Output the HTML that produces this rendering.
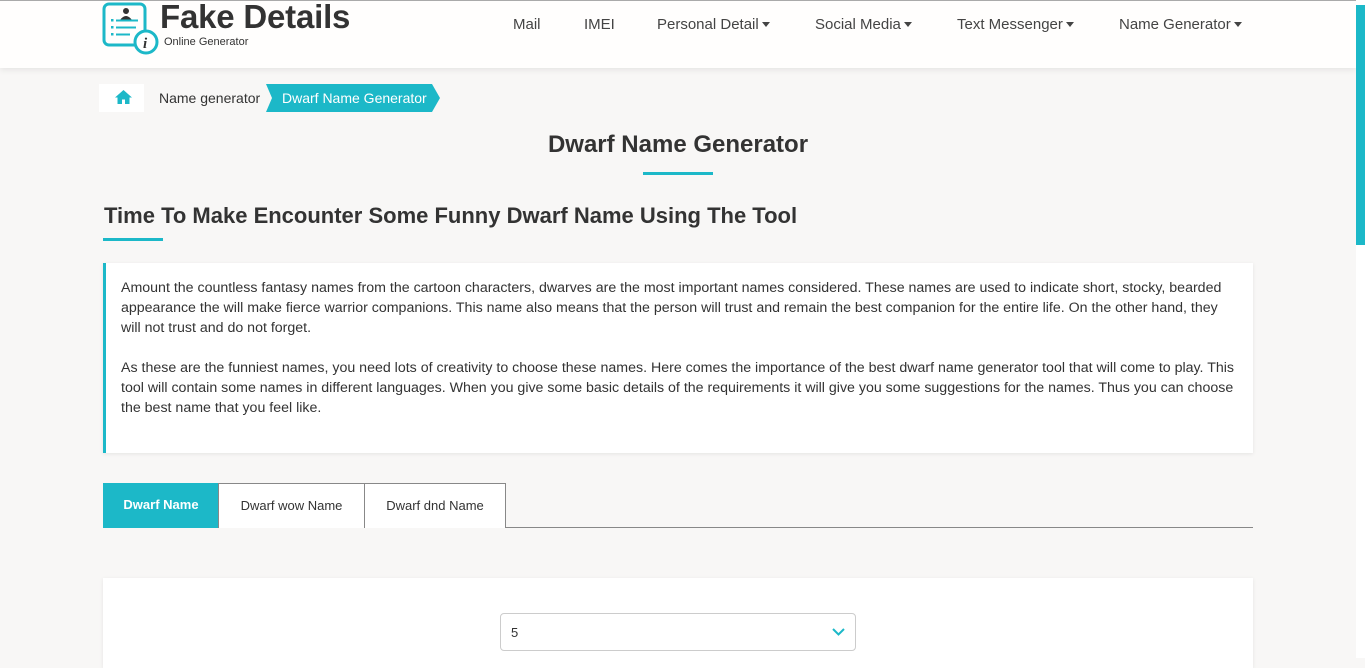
<!DOCTYPE html>
<html><head><style>
*{box-sizing:border-box;margin:0;padding:0}
body{width:1365px;height:658px;overflow:hidden;background:#f8f7f6;font-family:"Liberation Sans",sans-serif;color:#333;position:relative}
.hdr{position:absolute;left:0;top:0;width:1356px;height:68px;background:#fffefd;border-top:1px solid #aaa;box-shadow:0 2px 6px rgba(0,0,0,.08)}
.sb{position:absolute;left:1356px;top:0;width:9px;height:658px;background:#fff}
.sb i{position:absolute;left:0;top:5px;width:9px;height:240px;background:#1cb8c8}
.nav{position:absolute;top:15px;font-size:15px;color:#444}
.car{display:inline-block;border-left:4px solid transparent;border-right:4px solid transparent;border-top:5px solid #444;vertical-align:2px;margin-left:3px}
.t{position:absolute}
</style></head><body>
<div class="hdr">
<svg class="t" style="left:102px;top:1px" width="60" height="54" viewBox="0 0 60 54">
<rect x="2" y="2" width="41" height="41" rx="5" fill="none" stroke="#1cb8c8" stroke-width="3"/>
<circle cx="24" cy="9" r="3" fill="#333"/><path d="M18 18q6-8 12 0z" fill="#333"/>
<rect x="9" y="17" width="2.5" height="2.5" fill="#1cb8c8"/><rect x="14" y="17.5" width="22" height="2" fill="#1cb8c8"/>
<rect x="9" y="24" width="2.5" height="2.5" fill="#1cb8c8"/><rect x="14" y="24.5" width="20" height="2" fill="#1cb8c8"/>
<rect x="9" y="31" width="2.5" height="2.5" fill="#1cb8c8"/><rect x="14" y="31.5" width="14" height="2" fill="#1cb8c8"/>
<circle cx="44" cy="40" r="11" fill="#fff" stroke="#1cb8c8" stroke-width="3"/>
<text x="41" y="46" font-family="Liberation Serif" font-style="italic" font-weight="bold" font-size="15" fill="#333">i</text>
</svg>
<div class="t" style="left:160px;top:-3px;font-size:33px;font-weight:bold;color:#333;letter-spacing:-.2px">Fake Details</div>
<div class="t" style="left:164px;top:35px;font-size:11px;color:#333">Online Generator</div>
<div class="nav" style="left:513px">Mail</div>
<div class="nav" style="left:584px">IMEI</div>
<div class="nav" style="left:657px">Personal Detail<span class="car"></span></div>
<div class="nav" style="left:815px">Social Media<span class="car"></span></div>
<div class="nav" style="left:957px">Text Messenger<span class="car"></span></div>
<div class="nav" style="left:1119px">Name Generator<span class="car"></span></div>
</div>
<div class="sb"><i></i></div>
<div class="t" style="left:99px;top:84px;width:45px;height:28px;background:#fff"></div>
<svg class="t" style="left:114px;top:89px" width="19" height="16" viewBox="0 0 19 16"><path d="M9.5 1L1 8.5h2.5V15h4.5v-4.5h3V15h4.5V8.5H18z" fill="#1cb8c8"/></svg>
<div class="t" style="left:159px;top:90px;font-size:14px;color:#333">Name generator</div>
<svg class="t" style="left:266px;top:84px" width="175" height="28"><polygon points="0,0 166,0 174,14 166,28 0,28 6,14" fill="#1cb8c8"/></svg>
<div class="t" style="left:282px;top:90px;font-size:14px;color:#fff">Dwarf Name Generator</div>
<div class="t" style="left:0;width:1356px;top:131px;text-align:center;font-size:24px;font-weight:bold;color:#333">Dwarf Name Generator</div>
<div class="t" style="left:643px;top:172px;width:70px;height:3px;background:#1cb8c8"></div>
<div class="t" style="left:104px;top:203px;font-size:22px;font-weight:bold;color:#333">Time To Make Encounter Some Funny Dwarf Name Using The Tool</div>
<div class="t" style="left:103px;top:238px;width:60px;height:3px;background:#1cb8c8"></div>
<div class="t" style="left:103px;top:263px;width:1150px;height:190px;background:#fff;border-left:3px solid #1cb8c8;box-shadow:0 1px 4px rgba(0,0,0,.08);padding:15px 15px;font-size:14.2px;line-height:20px;color:#333">
<p>Amount the countless fantasy names from the cartoon characters, dwarves are the most important names considered. These names are used to indicate short, stocky, bearded appearance the will make fierce warrior companions. This name also means that the person will trust and remain the best companion for the entire life. On the other hand, they will not trust and do not forget.</p>
<p style="margin-top:20px">As these are the funniest names, you need lots of creativity to choose these names. Here comes the importance of the best dwarf name generator tool that will come to play. This tool will contain some names in different languages. When you give some basic details of the requirements it will give you some suggestions for the names. Thus you can choose the best name that you feel like.</p>
</div>
<div class="t" style="left:103px;top:527px;width:1150px;height:1px;background:#888"></div>
<div class="t" style="left:103px;top:483px;width:116px;height:45px;background:#1cb8c8;color:#fff;font-size:13px;font-weight:bold;text-align:center;line-height:44px">Dwarf Name</div>
<div class="t" style="left:218px;top:483px;width:147px;height:45px;background:#fff;border:1px solid #888;border-bottom:none;font-size:13px;text-align:center;line-height:43px">Dwarf wow Name</div>
<div class="t" style="left:364px;top:483px;width:142px;height:45px;background:#fff;border:1px solid #888;border-bottom:none;font-size:13px;text-align:center;line-height:43px">Dwarf dnd Name</div>
<div class="t" style="left:103px;top:578px;width:1150px;height:90px;background:#fff;box-shadow:0 1px 4px rgba(0,0,0,.08)"></div>
<div class="t" style="left:500px;top:613px;width:356px;height:38px;border:1px solid #ccc;border-radius:4px;background:#fff;font-size:13px;padding:11px 10px">5</div>
<svg class="t" style="left:832px;top:628px" width="13" height="8"><path d="M1 1l5.5 5.5L12 1" fill="none" stroke="#1cb8c8" stroke-width="2"/></svg>
</body></html>
